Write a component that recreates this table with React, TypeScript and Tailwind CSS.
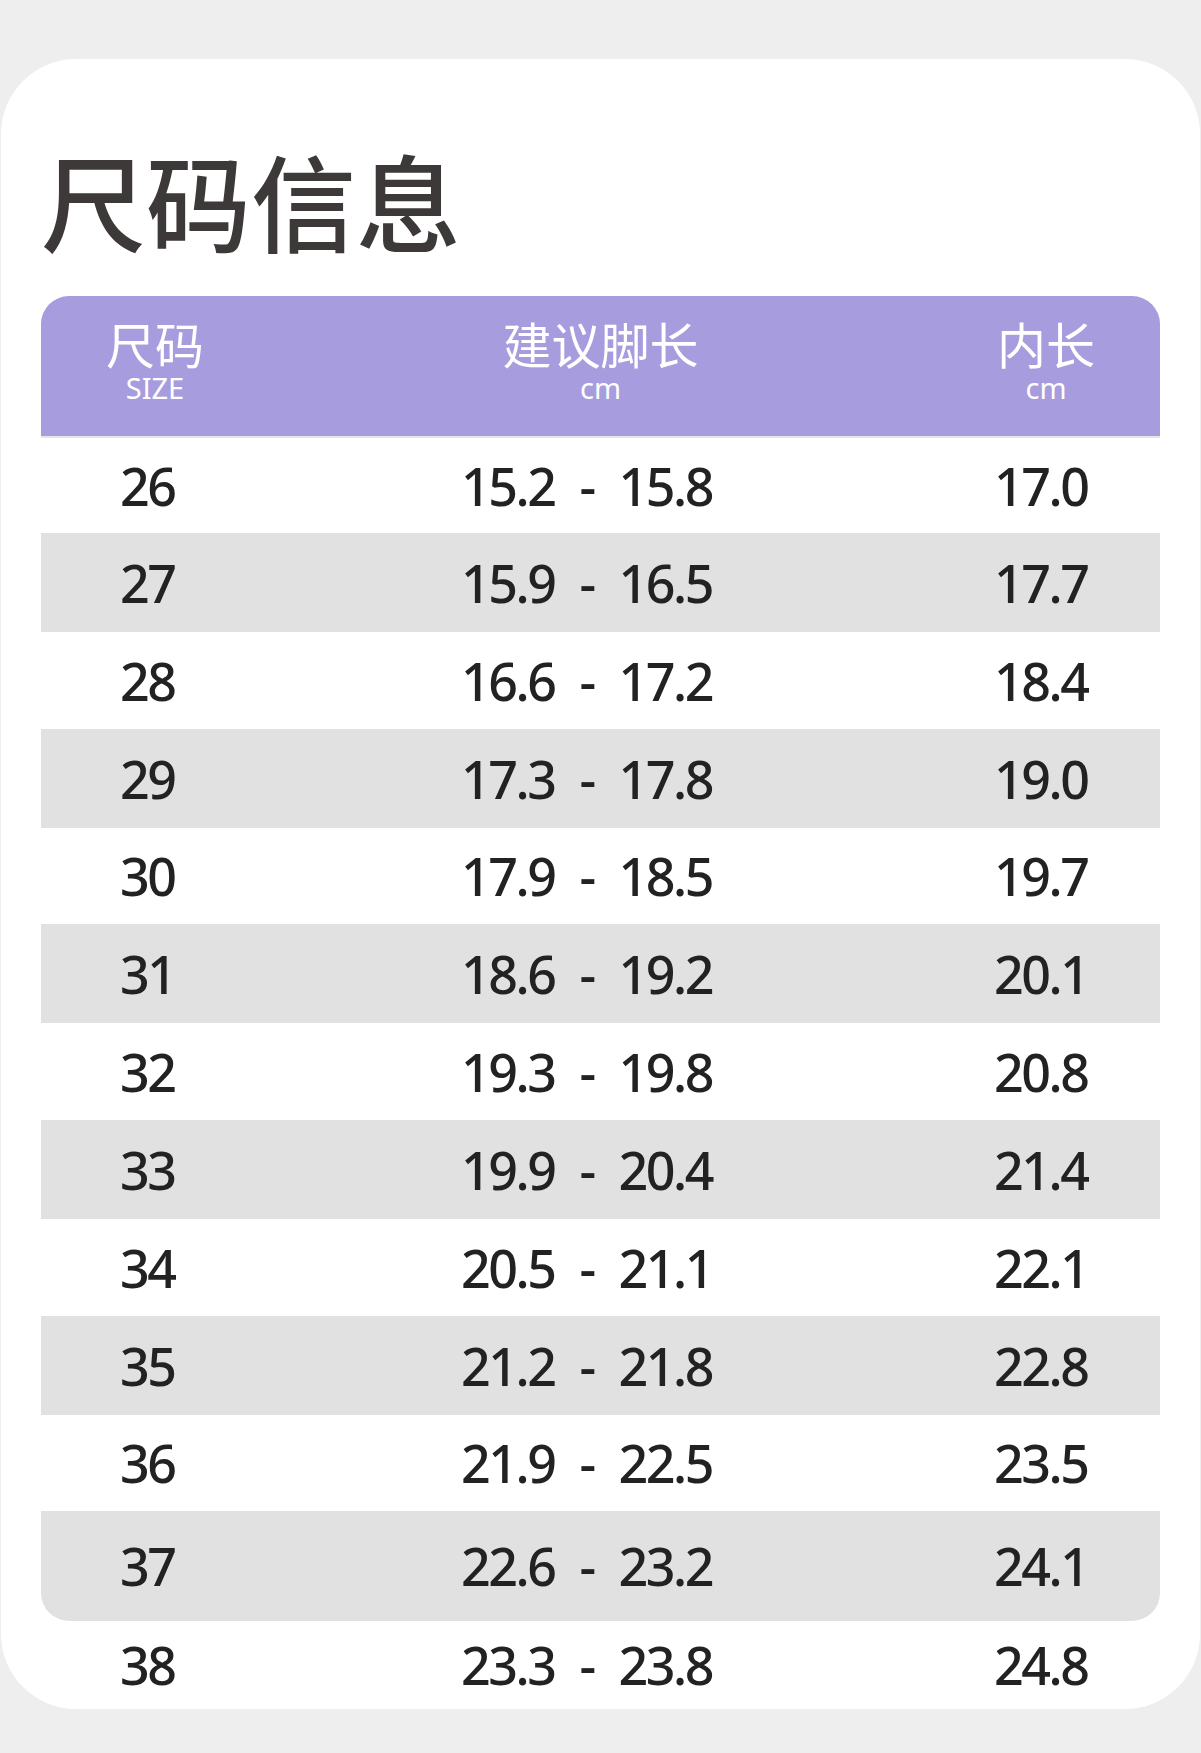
const rows = [
  { size: "26", low: "15.2", high: "15.8", inner: "17.0", h: "h-[95px]", bg: "bg-white" },
  { size: "27", low: "15.9", high: "16.5", inner: "17.7", h: "h-[99px]", bg: "bg-[#e1e1e1]" },
  { size: "28", low: "16.6", high: "17.2", inner: "18.4", h: "h-[97px]", bg: "bg-white" },
  { size: "29", low: "17.3", high: "17.8", inner: "19.0", h: "h-[99px]", bg: "bg-[#e1e1e1]" },
  { size: "30", low: "17.9", high: "18.5", inner: "19.7", h: "h-[96px]", bg: "bg-white" },
  { size: "31", low: "18.6", high: "19.2", inner: "20.1", h: "h-[99px]", bg: "bg-[#e1e1e1]" },
  { size: "32", low: "19.3", high: "19.8", inner: "20.8", h: "h-[97px]", bg: "bg-white" },
  { size: "33", low: "19.9", high: "20.4", inner: "21.4", h: "h-[99px]", bg: "bg-[#e1e1e1]" },
  { size: "34", low: "20.5", high: "21.1", inner: "22.1", h: "h-[97px]", bg: "bg-white" },
  { size: "35", low: "21.2", high: "21.8", inner: "22.8", h: "h-[99px]", bg: "bg-[#e1e1e1]" },
  { size: "36", low: "21.9", high: "22.5", inner: "23.5", h: "h-[96px]", bg: "bg-white" },
  { size: "37", low: "22.6", high: "23.2", inner: "24.1", h: "h-[110px]", bg: "bg-[#e1e1e1]" },
];

// 38 sits outside the rounded table block, like in the source artwork
const lastRow = { size: "38", low: "23.3", high: "23.8", inner: "24.8", h: "h-[88px]", bg: "bg-white" };

const numFont = "font-['Noto_Sans',sans-serif]";
const cjkFont = "font-['Noto_Sans_CJK_SC','Noto_Sans',sans-serif]";

type Row = typeof lastRow;

function SizeRow({ row }: { row: Row }) {
  return (
    <div
      className={`grid grid-cols-[341px_533px_1fr] items-center pl-[79px] ${row.h} ${row.bg} ${numFont} text-[52px] leading-none font-medium tracking-[-2.5px] text-[#222222]`}
    >
      <span>{row.size}</span>
      <div className="flex items-center gap-[25px]">
        <span>{row.low}</span>
        <span>-</span>
        <span>{row.high}</span>
      </div>
      <span>{row.inner}</span>
    </div>
  );
}

function HeadCell({ title, unit }: { title: string; unit: string }) {
  return (
    <div className="flex flex-col items-center pt-[18px]">
      <span className={`${cjkFont} text-[49px] leading-[58px] font-normal text-white`}>{title}</span>
      <span className={`${numFont} text-[29px] leading-[32px] text-white`}>{unit}</span>
    </div>
  );
}

export default function App() {
  return (
    <div className="min-h-[1753px] bg-[#eeeeee] px-[1px] pt-[59px] pb-[43px]">
      <div className="overflow-hidden rounded-[75px] bg-white px-[40px]">
        <h1
          className={`${cjkFont} pt-[87px] text-[105px] leading-none font-medium text-[#3d3939]`}
        >
          尺码信息
        </h1>

        <div className="mt-[45px] overflow-hidden rounded-[28px]">
          <div className="grid h-[140px] grid-cols-[228px_1fr_228px] bg-[#a79dde]">
            <HeadCell title="尺码" unit="SIZE" />
            <HeadCell title="建议脚长" unit="cm" />
            <HeadCell title="内长" unit="cm" />
          </div>
          <div className="h-[2px] bg-[#e6e6e6]" />
          {rows.map((row) => (
            <SizeRow key={row.size} row={row} />
          ))}
        </div>

        <SizeRow row={lastRow} />
      </div>
    </div>
  );
}
